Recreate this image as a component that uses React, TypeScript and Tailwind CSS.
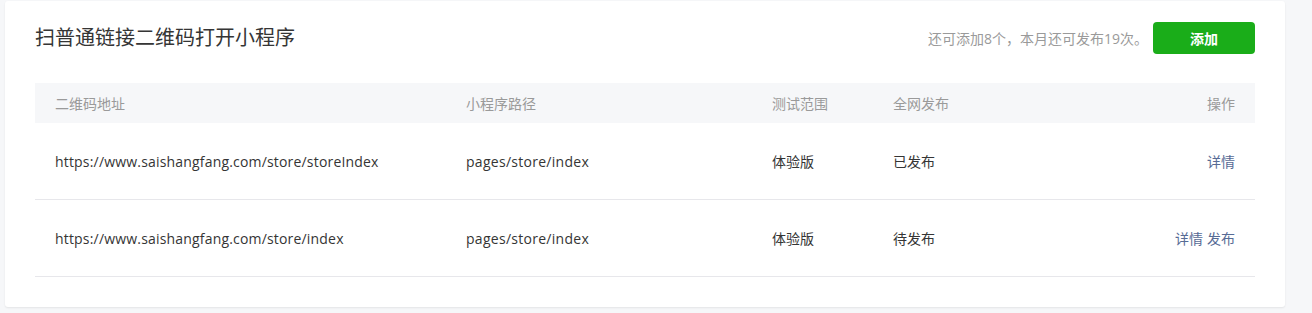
import React from "react";

const rows = [
  { url: "https://www.saishangfang.com/store/storeIndex", path: "pages/store/index", scope: "体验版", status: "已发布", ops: ["详情"] },
  { url: "https://www.saishangfang.com/store/index", path: "pages/store/index", scope: "体验版", status: "待发布", ops: ["详情", "发布"] },
];

export default function App() {
  return (
    <div
      className="w-[1312px] h-[313px] bg-[#f6f7f9] pt-px pl-[5px]"
      style={{ fontFamily: '"Open Sans", "Noto Sans CJK SC", sans-serif' }}
    >
      <div className="w-[1280px] h-[306px] bg-white rounded-[3px] shadow-[0_1px_2px_rgba(0,0,0,0.08)] px-[30px]">
        <div className="flex items-center justify-between h-[76px] pb-[2px]">
          <div className="text-[20px] text-[#353535] leading-none">扫普通链接二维码打开小程序</div>
          <div className="flex items-center">
            <span className="text-[14px] text-[#9a9a9a] mr-[5px]">还可添加8个，本月还可发布19次。</span>
            <button className="w-[102px] h-[32px] rounded-[4px] bg-[#1aad19] text-white text-[14px] font-bold">添加</button>
          </div>
        </div>
        <div className="mt-[6px]">
          <div className="flex items-center h-[40px] bg-[#f6f7f9] text-[14px] text-[#9a9a9a]">
            <div className="w-[411px] pl-[20px]">二维码地址</div>
            <div className="w-[306px] pl-[20px]">小程序路径</div>
            <div className="w-[121px] pl-[20px]">测试范围</div>
            <div className="w-[140px] pl-[20px]">全网发布</div>
            <div className="flex-1 text-right pr-[20px]">操作</div>
          </div>
          {rows.map((r, i) => (
            <div key={i} className="flex items-center h-[77px] border-b border-[#e7e7eb] text-[14px] text-[#353535]">
              <div className="w-[411px] pl-[20px] tracking-[0.18px]">{r.url}</div>
              <div className="w-[306px] pl-[20px] tracking-[0.28px]">{r.path}</div>
              <div className="w-[121px] pl-[20px]">{r.scope}</div>
              <div className="w-[140px] pl-[20px]">{r.status}</div>
              <div className="flex-1 text-right pr-[20px] text-[#576b95]">
                {r.ops.map((o, j) => (
                  <span key={j} className={j > 0 ? "ml-[4px]" : ""}>{o}</span>
                ))}
              </div>
            </div>
          ))}
        </div>
      </div>
    </div>
  );
}
